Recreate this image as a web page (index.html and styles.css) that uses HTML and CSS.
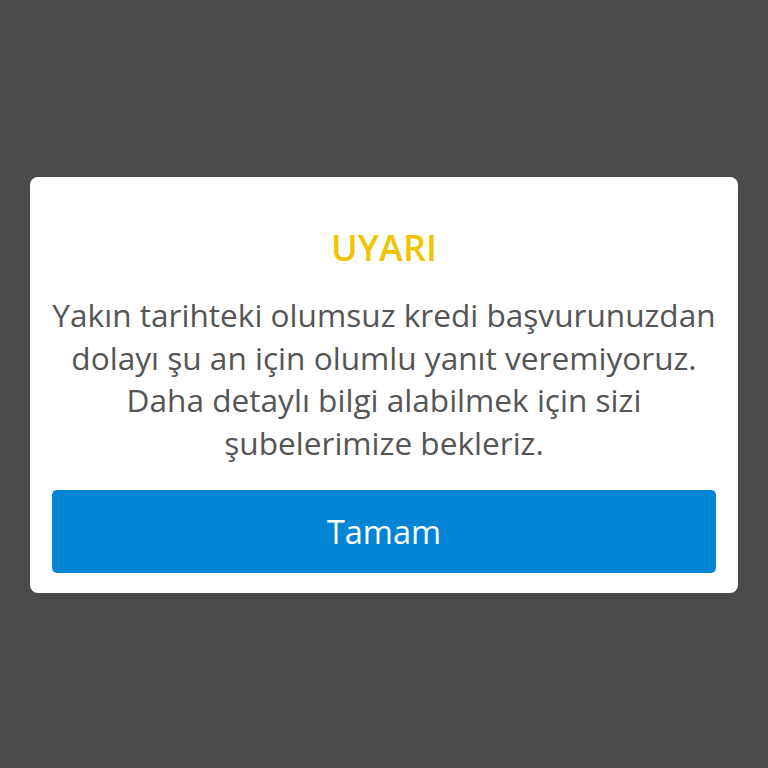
FILE: index.html
```html
<!DOCTYPE html>
<html lang="tr">
<head>
  <meta charset="UTF-8" />
  <meta name="viewport" content="width=device-width, initial-scale=1" />
  <title>Uyarı</title>
  <link rel="stylesheet" href="styles.css">
</head>
<body>
  <div class="overlay">
    <div class="dialog">
      <h1 class="dialog-title">UYARI</h1>
      <p class="dialog-text">Yakın tarihteki olumsuz kredi başvurunuzdan dolayı şu an için olumlu yanıt veremiyoruz. Daha detaylı bilgi alabilmek için sizi şubelerimize bekleriz.</p>
      <button class="dialog-button">Tamam</button>
    </div>
  </div>
</body>
</html>
```

FILE: styles.css
```css
html,
body {
  margin: 0;
  height: 100%;
}

body {
  background-color: #4a4a4a;
  font-family: "Open Sans", sans-serif;
}

.overlay {
  box-sizing: border-box;
  padding: 177px 30px 0;
}

.dialog {
  background-color: #fff;
  border-radius: 8px;
  padding: 49px 22px 20px;
  text-align: center;
}

.dialog-title {
  margin: 0;
  color: #f0c400;
  font-size: 36px;
  font-weight: 600;
  line-height: 44px;
}

.dialog-text {
  margin: 24px 0 26px;
  color: #555;
  font-size: 31.6px;
  line-height: 42.5px;
}

.dialog-button {
  display: block;
  width: 100%;
  height: 83px;
  border: none;
  border-radius: 5px;
  background-color: #0484d4;
  color: #fff;
  font-family: "Open Sans", sans-serif;
  font-size: 32.5px;
  cursor: pointer;
}
```
